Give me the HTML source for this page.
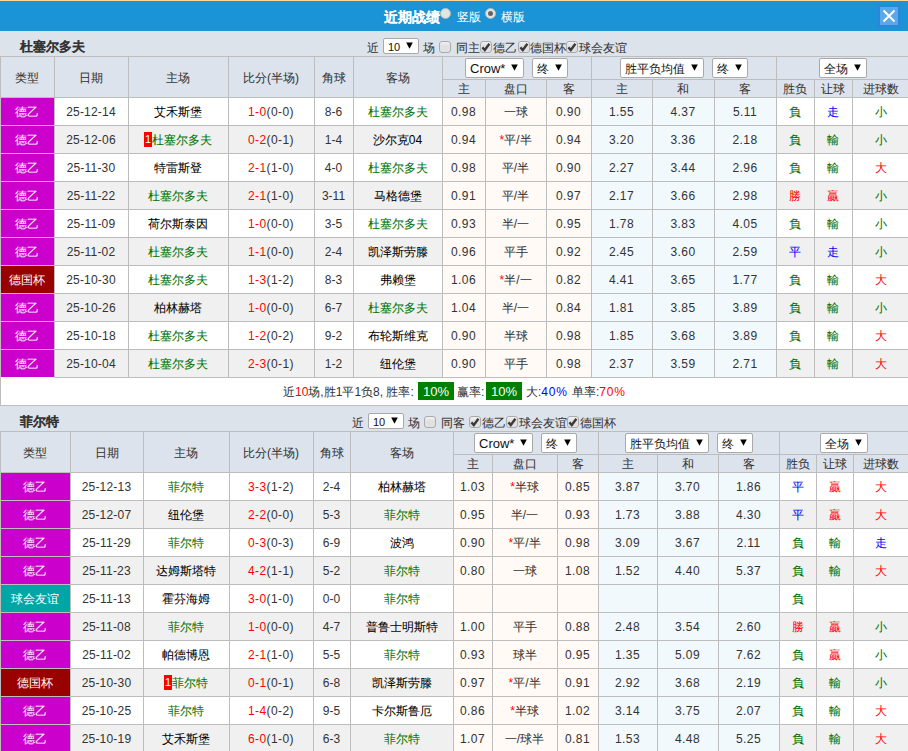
<!DOCTYPE html><html><head><meta charset="utf-8"><style>
html,body{margin:0;padding:0;}
body{width:908px;height:751px;overflow:hidden;position:relative;background:#fff;font-family:"Liberation Sans", sans-serif;font-size:12px;color:#333333;}
.a{position:absolute;}
.c{position:absolute;text-align:center;white-space:nowrap;overflow:hidden;}
.k{-webkit-text-stroke:0.05px currentColor;}
.hd{color:#333;}
.hd .k{-webkit-text-stroke:0.05px currentColor;}
.ty{color:#fff;}
.ty .k{-webkit-text-stroke:0;}
.t{position:absolute;white-space:nowrap;font-size:12px;}
.sel{position:absolute;background:#fff;border:1px solid #a9a9a9;border-radius:2px;font-size:12px;color:#111;text-align:left;padding-left:4px;box-sizing:content-box;white-space:nowrap;}
.sel .arr{position:absolute;right:5px;top:50%;margin-top:-4px;}
.chk{position:absolute;width:10px;height:10px;border:1px solid #aaaaaa;border-radius:3px;background:linear-gradient(#f2f2f2,#e0e0e0 40%,#e2e2e2);}
.chk svg{position:absolute;left:-1px;top:-1px;}
.radio{position:absolute;width:9px;height:9px;border-radius:50%;background:#e4e4e4;border:1px solid #b8b8b8;}
.radio.on::after{content:"";position:absolute;left:2px;top:2px;width:5px;height:5px;border-radius:50%;background:#666;}
.rc{display:inline-block;background:#f00;color:#fff;width:8px;height:15px;line-height:15px;text-align:center;vertical-align:middle;margin-top:-3px;font-size:11px;-webkit-text-stroke:0;}
.gb{position:absolute;background:#008000;color:#fff;height:18px;line-height:19px;font-size:13px;text-align:center;}
</style></head><body>
<div class="a" style="left:0px;top:0px;width:908px;height:1px;background:#fbd698;"></div>
<div class="a" style="left:0px;top:1px;width:908px;height:30px;background:#1a94d6;"></div>
<div class="t" style="left:384px;top:7px;font-size:14px;font-weight:bold;color:#fff;line-height:20px;"><span class="k">近期战绩</span></div>
<div class="radio" style="left:440px;top:8px;"></div>
<div class="t" style="left:457px;top:7px;font-size:12px;color:#fff;line-height:20px;"><span class="k">竖版</span></div>
<div class="radio on" style="left:485px;top:8px;"></div>
<div class="t" style="left:501px;top:7px;font-size:12px;color:#fff;line-height:20px;"><span class="k">横版</span></div>
<div class="a" style="left:878px;top:5px;width:22px;height:22px;background:#2b86e0;"></div>
<div class="a" style="left:880px;top:7px;width:18px;height:18px;background:#5aa8ea;"></div>
<svg class="a" style="left:880px;top:7px" width="18" height="18" viewBox="0 0 18 18"><path d="M3.5 3.5 L14.5 14.5 M14.5 3.5 L3.5 14.5" stroke="#fff" stroke-width="2"/></svg>
<div class="a" style="left:0px;top:31px;width:908px;height:25px;background:#dde3eb;"></div>
<div class="t" style="left:20px;top:38px;font-size:13px;font-weight:bold;color:#333;line-height:18px;"><span class="k">杜塞尔多夫</span></div>
<div class="t" style="left:367px;top:39px;line-height:18px;"><span class="k">近</span></div>
<div class="sel" style="left:383px;top:38px;width:30px;height:14px;line-height:16px;font-size:11px;">10<svg class="arr" width="7" height="7" viewBox="0 0 7 7"><path d="M0.2 0.5 H6.8 L3.5 6.8 Z" fill="#000"/></svg></div>
<div class="t" style="left:423px;top:39px;line-height:18px;"><span class="k">场</span></div>
<div class="chk" style="left:439px;top:41px;"></div>
<div class="t" style="left:456px;top:39px;line-height:18px;"><span class="k">同主</span></div>
<div class="chk" style="left:480px;top:41px;"><svg width="12" height="12" viewBox="0 0 12 12"><path d="M2.4 6.4 L4.8 9 L9.4 2.8" stroke="#3a3a3a" stroke-width="2.4" fill="none"/></svg></div>
<div class="t" style="left:493px;top:39px;line-height:18px;"><span class="k">德乙</span></div>
<div class="chk" style="left:518px;top:41px;"><svg width="12" height="12" viewBox="0 0 12 12"><path d="M2.4 6.4 L4.8 9 L9.4 2.8" stroke="#3a3a3a" stroke-width="2.4" fill="none"/></svg></div>
<div class="t" style="left:530px;top:39px;line-height:18px;"><span class="k">德国杯</span></div>
<div class="chk" style="left:566px;top:41px;"><svg width="12" height="12" viewBox="0 0 12 12"><path d="M2.4 6.4 L4.8 9 L9.4 2.8" stroke="#3a3a3a" stroke-width="2.4" fill="none"/></svg></div>
<div class="t" style="left:579px;top:39px;line-height:18px;"><span class="k">球会友谊</span></div>
<div class="a" style="left:0px;top:56px;width:909px;height:322px;background:#bdbdbd;"></div>
<div class="c hd" style="left:1px;top:57px;width:52px;padding-right:1px;height:40px;line-height:42px;background:#dce3ec;"><span class="k">类型</span></div>
<div class="c hd" style="left:55px;top:57px;width:72px;padding-right:1px;height:40px;line-height:42px;background:#dce3ec;"><span class="k">日期</span></div>
<div class="c hd" style="left:129px;top:57px;width:98px;padding-right:1px;height:40px;line-height:42px;background:#dce3ec;"><span class="k">主场</span></div>
<div class="c hd" style="left:229px;top:57px;width:84px;padding-right:1px;height:40px;line-height:42px;background:#dce3ec;"><span class="k">比分</span>(<span class="k">半场</span>)</div>
<div class="c hd" style="left:315px;top:57px;width:37px;padding-right:1px;height:40px;line-height:42px;background:#dce3ec;"><span class="k">角球</span></div>
<div class="c hd" style="left:354px;top:57px;width:87px;padding-right:1px;height:40px;line-height:42px;background:#dce3ec;"><span class="k">客场</span></div>
<div class="c" style="left:443px;top:57px;width:147px;padding-right:1px;height:22px;line-height:24px;background:#dce3ec;"></div>
<div class="c" style="left:592px;top:57px;width:183px;padding-right:1px;height:22px;line-height:24px;background:#dce3ec;"></div>
<div class="c" style="left:777px;top:57px;width:131px;padding-right:1px;height:22px;line-height:24px;background:#dce3ec;"></div>
<div class="c hd" style="left:443px;top:80px;width:41px;padding-right:1px;height:17px;line-height:19px;background:#dce3ec;"><span class="k">主</span></div>
<div class="c hd" style="left:486px;top:80px;width:59px;padding-right:1px;height:17px;line-height:19px;background:#dce3ec;"><span class="k">盘口</span></div>
<div class="c hd" style="left:547px;top:80px;width:43px;padding-right:1px;height:17px;line-height:19px;background:#dce3ec;"><span class="k">客</span></div>
<div class="c hd" style="left:592px;top:80px;width:59px;padding-right:1px;height:17px;line-height:19px;background:#dce3ec;"><span class="k">主</span></div>
<div class="c hd" style="left:653px;top:80px;width:60px;padding-right:1px;height:17px;line-height:19px;background:#dce3ec;"><span class="k">和</span></div>
<div class="c hd" style="left:715px;top:80px;width:60px;padding-right:1px;height:17px;line-height:19px;background:#dce3ec;"><span class="k">客</span></div>
<div class="c hd" style="left:777px;top:80px;width:36px;padding-right:1px;height:17px;line-height:19px;background:#dce3ec;"><span class="k">胜负</span></div>
<div class="c hd" style="left:815px;top:80px;width:36px;padding-right:1px;height:17px;line-height:19px;background:#dce3ec;"><span class="k">让球</span></div>
<div class="c hd" style="left:853px;top:80px;width:55px;padding-right:1px;height:17px;line-height:19px;background:#dce3ec;"><span class="k">进球数</span></div>
<div class="c ty" style="left:1px;top:98px;width:52px;padding-right:1px;height:27px;line-height:29px;background:#cc00cc;"><span class="k">德乙</span></div>
<div class="c" style="left:55px;top:98px;width:72px;padding-right:1px;height:27px;line-height:29px;background:#ffffff;letter-spacing:0.2px;letter-spacing:0.2px;">25-12-14</div>
<div class="c" style="left:129px;top:98px;width:98px;padding-right:1px;height:27px;line-height:29px;background:#ffffff;color:#000;color:#000;"><span class="k">艾禾斯堡</span></div>
<div class="c" style="left:229px;top:98px;width:84px;padding-right:1px;height:27px;line-height:29px;background:#ffffff;letter-spacing:0.4px;letter-spacing:0.4px;"><span style="color:#ff0000">1-0</span>(0-0)</div>
<div class="c" style="left:315px;top:98px;width:37px;padding-right:1px;height:27px;line-height:29px;background:#ffffff;">8-6</div>
<div class="c" style="left:354px;top:98px;width:87px;padding-right:1px;height:27px;line-height:29px;background:#ffffff;color:#000;color:#000;"><span style="color:#007000"><span class="k">杜塞尔多夫</span></span></div>
<div class="c" style="left:443px;top:98px;width:41px;padding-right:1px;height:27px;line-height:29px;background:#fffaf6;letter-spacing:0.4px;letter-spacing:0.4px;">0.98</div>
<div class="c" style="left:486px;top:98px;width:59px;padding-right:1px;height:27px;line-height:29px;background:#fffaf6;"><span class="k">一球</span></div>
<div class="c" style="left:547px;top:98px;width:43px;padding-right:1px;height:27px;line-height:29px;background:#fffaf6;letter-spacing:0.4px;letter-spacing:0.4px;">0.90</div>
<div class="c" style="left:592px;top:98px;width:59px;padding-right:1px;height:27px;line-height:29px;background:#f2f9fd;letter-spacing:0.4px;letter-spacing:0.4px;">1.55</div>
<div class="c" style="left:653px;top:98px;width:60px;padding-right:1px;height:27px;line-height:29px;background:#f2f9fd;letter-spacing:0.4px;letter-spacing:0.4px;">4.37</div>
<div class="c" style="left:715px;top:98px;width:60px;padding-right:1px;height:27px;line-height:29px;background:#f2f9fd;letter-spacing:0.4px;letter-spacing:0.4px;">5.11</div>
<div class="c" style="left:777px;top:98px;width:36px;padding-right:1px;height:27px;line-height:29px;background:#ffffff;"><span style="color:#007000"><span class="k">負</span></span></div>
<div class="c" style="left:815px;top:98px;width:36px;padding-right:1px;height:27px;line-height:29px;background:#ffffff;"><span style="color:#0000ff"><span class="k">走</span></span></div>
<div class="c" style="left:853px;top:98px;width:55px;padding-right:1px;height:27px;line-height:29px;background:#ffffff;"><span style="color:#007000"><span class="k">小</span></span></div>
<div class="c ty" style="left:1px;top:126px;width:52px;padding-right:1px;height:27px;line-height:29px;background:#cc00cc;"><span class="k">德乙</span></div>
<div class="c" style="left:55px;top:126px;width:72px;padding-right:1px;height:27px;line-height:29px;background:#f0f0f0;letter-spacing:0.2px;letter-spacing:0.2px;">25-12-06</div>
<div class="c" style="left:129px;top:126px;width:98px;padding-right:1px;height:27px;line-height:29px;background:#f0f0f0;color:#000;color:#000;"><span class="rc">1</span><span style="color:#007000"><span class="k">杜塞尔多夫</span></span></div>
<div class="c" style="left:229px;top:126px;width:84px;padding-right:1px;height:27px;line-height:29px;background:#f0f0f0;letter-spacing:0.4px;letter-spacing:0.4px;"><span style="color:#ff0000">0-2</span>(0-1)</div>
<div class="c" style="left:315px;top:126px;width:37px;padding-right:1px;height:27px;line-height:29px;background:#f0f0f0;">1-4</div>
<div class="c" style="left:354px;top:126px;width:87px;padding-right:1px;height:27px;line-height:29px;background:#f0f0f0;color:#000;color:#000;"><span class="k">沙尔克</span>04</div>
<div class="c" style="left:443px;top:126px;width:41px;padding-right:1px;height:27px;line-height:29px;background:#fffaf6;letter-spacing:0.4px;letter-spacing:0.4px;">0.94</div>
<div class="c" style="left:486px;top:126px;width:59px;padding-right:1px;height:27px;line-height:29px;background:#fffaf6;"><span style="color:#ff0000">*</span><span class="k">平</span>/<span class="k">半</span></div>
<div class="c" style="left:547px;top:126px;width:43px;padding-right:1px;height:27px;line-height:29px;background:#fffaf6;letter-spacing:0.4px;letter-spacing:0.4px;">0.94</div>
<div class="c" style="left:592px;top:126px;width:59px;padding-right:1px;height:27px;line-height:29px;background:#f2f9fd;letter-spacing:0.4px;letter-spacing:0.4px;">3.20</div>
<div class="c" style="left:653px;top:126px;width:60px;padding-right:1px;height:27px;line-height:29px;background:#f2f9fd;letter-spacing:0.4px;letter-spacing:0.4px;">3.36</div>
<div class="c" style="left:715px;top:126px;width:60px;padding-right:1px;height:27px;line-height:29px;background:#f2f9fd;letter-spacing:0.4px;letter-spacing:0.4px;">2.18</div>
<div class="c" style="left:777px;top:126px;width:36px;padding-right:1px;height:27px;line-height:29px;background:#f0f0f0;"><span style="color:#007000"><span class="k">負</span></span></div>
<div class="c" style="left:815px;top:126px;width:36px;padding-right:1px;height:27px;line-height:29px;background:#f0f0f0;"><span style="color:#007000"><span class="k">輸</span></span></div>
<div class="c" style="left:853px;top:126px;width:55px;padding-right:1px;height:27px;line-height:29px;background:#f0f0f0;"><span style="color:#007000"><span class="k">小</span></span></div>
<div class="c ty" style="left:1px;top:154px;width:52px;padding-right:1px;height:27px;line-height:29px;background:#cc00cc;"><span class="k">德乙</span></div>
<div class="c" style="left:55px;top:154px;width:72px;padding-right:1px;height:27px;line-height:29px;background:#ffffff;letter-spacing:0.2px;letter-spacing:0.2px;">25-11-30</div>
<div class="c" style="left:129px;top:154px;width:98px;padding-right:1px;height:27px;line-height:29px;background:#ffffff;color:#000;color:#000;"><span class="k">特雷斯登</span></div>
<div class="c" style="left:229px;top:154px;width:84px;padding-right:1px;height:27px;line-height:29px;background:#ffffff;letter-spacing:0.4px;letter-spacing:0.4px;"><span style="color:#ff0000">2-1</span>(1-0)</div>
<div class="c" style="left:315px;top:154px;width:37px;padding-right:1px;height:27px;line-height:29px;background:#ffffff;">4-0</div>
<div class="c" style="left:354px;top:154px;width:87px;padding-right:1px;height:27px;line-height:29px;background:#ffffff;color:#000;color:#000;"><span style="color:#007000"><span class="k">杜塞尔多夫</span></span></div>
<div class="c" style="left:443px;top:154px;width:41px;padding-right:1px;height:27px;line-height:29px;background:#fffaf6;letter-spacing:0.4px;letter-spacing:0.4px;">0.98</div>
<div class="c" style="left:486px;top:154px;width:59px;padding-right:1px;height:27px;line-height:29px;background:#fffaf6;"><span class="k">平</span>/<span class="k">半</span></div>
<div class="c" style="left:547px;top:154px;width:43px;padding-right:1px;height:27px;line-height:29px;background:#fffaf6;letter-spacing:0.4px;letter-spacing:0.4px;">0.90</div>
<div class="c" style="left:592px;top:154px;width:59px;padding-right:1px;height:27px;line-height:29px;background:#f2f9fd;letter-spacing:0.4px;letter-spacing:0.4px;">2.27</div>
<div class="c" style="left:653px;top:154px;width:60px;padding-right:1px;height:27px;line-height:29px;background:#f2f9fd;letter-spacing:0.4px;letter-spacing:0.4px;">3.44</div>
<div class="c" style="left:715px;top:154px;width:60px;padding-right:1px;height:27px;line-height:29px;background:#f2f9fd;letter-spacing:0.4px;letter-spacing:0.4px;">2.96</div>
<div class="c" style="left:777px;top:154px;width:36px;padding-right:1px;height:27px;line-height:29px;background:#ffffff;"><span style="color:#007000"><span class="k">負</span></span></div>
<div class="c" style="left:815px;top:154px;width:36px;padding-right:1px;height:27px;line-height:29px;background:#ffffff;"><span style="color:#007000"><span class="k">輸</span></span></div>
<div class="c" style="left:853px;top:154px;width:55px;padding-right:1px;height:27px;line-height:29px;background:#ffffff;"><span style="color:#ff0000"><span class="k">大</span></span></div>
<div class="c ty" style="left:1px;top:182px;width:52px;padding-right:1px;height:27px;line-height:29px;background:#cc00cc;"><span class="k">德乙</span></div>
<div class="c" style="left:55px;top:182px;width:72px;padding-right:1px;height:27px;line-height:29px;background:#f0f0f0;letter-spacing:0.2px;letter-spacing:0.2px;">25-11-22</div>
<div class="c" style="left:129px;top:182px;width:98px;padding-right:1px;height:27px;line-height:29px;background:#f0f0f0;color:#000;color:#000;"><span style="color:#007000"><span class="k">杜塞尔多夫</span></span></div>
<div class="c" style="left:229px;top:182px;width:84px;padding-right:1px;height:27px;line-height:29px;background:#f0f0f0;letter-spacing:0.4px;letter-spacing:0.4px;"><span style="color:#ff0000">2-1</span>(1-0)</div>
<div class="c" style="left:315px;top:182px;width:37px;padding-right:1px;height:27px;line-height:29px;background:#f0f0f0;">3-11</div>
<div class="c" style="left:354px;top:182px;width:87px;padding-right:1px;height:27px;line-height:29px;background:#f0f0f0;color:#000;color:#000;"><span class="k">马格德堡</span></div>
<div class="c" style="left:443px;top:182px;width:41px;padding-right:1px;height:27px;line-height:29px;background:#fffaf6;letter-spacing:0.4px;letter-spacing:0.4px;">0.91</div>
<div class="c" style="left:486px;top:182px;width:59px;padding-right:1px;height:27px;line-height:29px;background:#fffaf6;"><span class="k">平</span>/<span class="k">半</span></div>
<div class="c" style="left:547px;top:182px;width:43px;padding-right:1px;height:27px;line-height:29px;background:#fffaf6;letter-spacing:0.4px;letter-spacing:0.4px;">0.97</div>
<div class="c" style="left:592px;top:182px;width:59px;padding-right:1px;height:27px;line-height:29px;background:#f2f9fd;letter-spacing:0.4px;letter-spacing:0.4px;">2.17</div>
<div class="c" style="left:653px;top:182px;width:60px;padding-right:1px;height:27px;line-height:29px;background:#f2f9fd;letter-spacing:0.4px;letter-spacing:0.4px;">3.66</div>
<div class="c" style="left:715px;top:182px;width:60px;padding-right:1px;height:27px;line-height:29px;background:#f2f9fd;letter-spacing:0.4px;letter-spacing:0.4px;">2.98</div>
<div class="c" style="left:777px;top:182px;width:36px;padding-right:1px;height:27px;line-height:29px;background:#f0f0f0;"><span style="color:#ff0000"><span class="k">勝</span></span></div>
<div class="c" style="left:815px;top:182px;width:36px;padding-right:1px;height:27px;line-height:29px;background:#f0f0f0;"><span style="color:#ff0000"><span class="k">贏</span></span></div>
<div class="c" style="left:853px;top:182px;width:55px;padding-right:1px;height:27px;line-height:29px;background:#f0f0f0;"><span style="color:#007000"><span class="k">小</span></span></div>
<div class="c ty" style="left:1px;top:210px;width:52px;padding-right:1px;height:27px;line-height:29px;background:#cc00cc;"><span class="k">德乙</span></div>
<div class="c" style="left:55px;top:210px;width:72px;padding-right:1px;height:27px;line-height:29px;background:#ffffff;letter-spacing:0.2px;letter-spacing:0.2px;">25-11-09</div>
<div class="c" style="left:129px;top:210px;width:98px;padding-right:1px;height:27px;line-height:29px;background:#ffffff;color:#000;color:#000;"><span class="k">荷尔斯泰因</span></div>
<div class="c" style="left:229px;top:210px;width:84px;padding-right:1px;height:27px;line-height:29px;background:#ffffff;letter-spacing:0.4px;letter-spacing:0.4px;"><span style="color:#ff0000">1-0</span>(0-0)</div>
<div class="c" style="left:315px;top:210px;width:37px;padding-right:1px;height:27px;line-height:29px;background:#ffffff;">3-5</div>
<div class="c" style="left:354px;top:210px;width:87px;padding-right:1px;height:27px;line-height:29px;background:#ffffff;color:#000;color:#000;"><span style="color:#007000"><span class="k">杜塞尔多夫</span></span></div>
<div class="c" style="left:443px;top:210px;width:41px;padding-right:1px;height:27px;line-height:29px;background:#fffaf6;letter-spacing:0.4px;letter-spacing:0.4px;">0.93</div>
<div class="c" style="left:486px;top:210px;width:59px;padding-right:1px;height:27px;line-height:29px;background:#fffaf6;"><span class="k">半</span>/<span class="k">一</span></div>
<div class="c" style="left:547px;top:210px;width:43px;padding-right:1px;height:27px;line-height:29px;background:#fffaf6;letter-spacing:0.4px;letter-spacing:0.4px;">0.95</div>
<div class="c" style="left:592px;top:210px;width:59px;padding-right:1px;height:27px;line-height:29px;background:#f2f9fd;letter-spacing:0.4px;letter-spacing:0.4px;">1.78</div>
<div class="c" style="left:653px;top:210px;width:60px;padding-right:1px;height:27px;line-height:29px;background:#f2f9fd;letter-spacing:0.4px;letter-spacing:0.4px;">3.83</div>
<div class="c" style="left:715px;top:210px;width:60px;padding-right:1px;height:27px;line-height:29px;background:#f2f9fd;letter-spacing:0.4px;letter-spacing:0.4px;">4.05</div>
<div class="c" style="left:777px;top:210px;width:36px;padding-right:1px;height:27px;line-height:29px;background:#ffffff;"><span style="color:#007000"><span class="k">負</span></span></div>
<div class="c" style="left:815px;top:210px;width:36px;padding-right:1px;height:27px;line-height:29px;background:#ffffff;"><span style="color:#007000"><span class="k">輸</span></span></div>
<div class="c" style="left:853px;top:210px;width:55px;padding-right:1px;height:27px;line-height:29px;background:#ffffff;"><span style="color:#007000"><span class="k">小</span></span></div>
<div class="c ty" style="left:1px;top:238px;width:52px;padding-right:1px;height:27px;line-height:29px;background:#cc00cc;"><span class="k">德乙</span></div>
<div class="c" style="left:55px;top:238px;width:72px;padding-right:1px;height:27px;line-height:29px;background:#f0f0f0;letter-spacing:0.2px;letter-spacing:0.2px;">25-11-02</div>
<div class="c" style="left:129px;top:238px;width:98px;padding-right:1px;height:27px;line-height:29px;background:#f0f0f0;color:#000;color:#000;"><span style="color:#007000"><span class="k">杜塞尔多夫</span></span></div>
<div class="c" style="left:229px;top:238px;width:84px;padding-right:1px;height:27px;line-height:29px;background:#f0f0f0;letter-spacing:0.4px;letter-spacing:0.4px;"><span style="color:#ff0000">1-1</span>(0-0)</div>
<div class="c" style="left:315px;top:238px;width:37px;padding-right:1px;height:27px;line-height:29px;background:#f0f0f0;">2-4</div>
<div class="c" style="left:354px;top:238px;width:87px;padding-right:1px;height:27px;line-height:29px;background:#f0f0f0;color:#000;color:#000;"><span class="k">凯泽斯劳滕</span></div>
<div class="c" style="left:443px;top:238px;width:41px;padding-right:1px;height:27px;line-height:29px;background:#fffaf6;letter-spacing:0.4px;letter-spacing:0.4px;">0.96</div>
<div class="c" style="left:486px;top:238px;width:59px;padding-right:1px;height:27px;line-height:29px;background:#fffaf6;"><span class="k">平手</span></div>
<div class="c" style="left:547px;top:238px;width:43px;padding-right:1px;height:27px;line-height:29px;background:#fffaf6;letter-spacing:0.4px;letter-spacing:0.4px;">0.92</div>
<div class="c" style="left:592px;top:238px;width:59px;padding-right:1px;height:27px;line-height:29px;background:#f2f9fd;letter-spacing:0.4px;letter-spacing:0.4px;">2.45</div>
<div class="c" style="left:653px;top:238px;width:60px;padding-right:1px;height:27px;line-height:29px;background:#f2f9fd;letter-spacing:0.4px;letter-spacing:0.4px;">3.60</div>
<div class="c" style="left:715px;top:238px;width:60px;padding-right:1px;height:27px;line-height:29px;background:#f2f9fd;letter-spacing:0.4px;letter-spacing:0.4px;">2.59</div>
<div class="c" style="left:777px;top:238px;width:36px;padding-right:1px;height:27px;line-height:29px;background:#f0f0f0;"><span style="color:#0000ff"><span class="k">平</span></span></div>
<div class="c" style="left:815px;top:238px;width:36px;padding-right:1px;height:27px;line-height:29px;background:#f0f0f0;"><span style="color:#0000ff"><span class="k">走</span></span></div>
<div class="c" style="left:853px;top:238px;width:55px;padding-right:1px;height:27px;line-height:29px;background:#f0f0f0;"><span style="color:#007000"><span class="k">小</span></span></div>
<div class="c ty" style="left:1px;top:266px;width:52px;padding-right:1px;height:27px;line-height:29px;background:#990000;"><span class="k">德国杯</span></div>
<div class="c" style="left:55px;top:266px;width:72px;padding-right:1px;height:27px;line-height:29px;background:#ffffff;letter-spacing:0.2px;letter-spacing:0.2px;">25-10-30</div>
<div class="c" style="left:129px;top:266px;width:98px;padding-right:1px;height:27px;line-height:29px;background:#ffffff;color:#000;color:#000;"><span style="color:#007000"><span class="k">杜塞尔多夫</span></span></div>
<div class="c" style="left:229px;top:266px;width:84px;padding-right:1px;height:27px;line-height:29px;background:#ffffff;letter-spacing:0.4px;letter-spacing:0.4px;"><span style="color:#ff0000">1-3</span>(1-2)</div>
<div class="c" style="left:315px;top:266px;width:37px;padding-right:1px;height:27px;line-height:29px;background:#ffffff;">8-3</div>
<div class="c" style="left:354px;top:266px;width:87px;padding-right:1px;height:27px;line-height:29px;background:#ffffff;color:#000;color:#000;"><span class="k">弗赖堡</span></div>
<div class="c" style="left:443px;top:266px;width:41px;padding-right:1px;height:27px;line-height:29px;background:#fffaf6;letter-spacing:0.4px;letter-spacing:0.4px;">1.06</div>
<div class="c" style="left:486px;top:266px;width:59px;padding-right:1px;height:27px;line-height:29px;background:#fffaf6;"><span style="color:#ff0000">*</span><span class="k">半</span>/<span class="k">一</span></div>
<div class="c" style="left:547px;top:266px;width:43px;padding-right:1px;height:27px;line-height:29px;background:#fffaf6;letter-spacing:0.4px;letter-spacing:0.4px;">0.82</div>
<div class="c" style="left:592px;top:266px;width:59px;padding-right:1px;height:27px;line-height:29px;background:#f2f9fd;letter-spacing:0.4px;letter-spacing:0.4px;">4.41</div>
<div class="c" style="left:653px;top:266px;width:60px;padding-right:1px;height:27px;line-height:29px;background:#f2f9fd;letter-spacing:0.4px;letter-spacing:0.4px;">3.65</div>
<div class="c" style="left:715px;top:266px;width:60px;padding-right:1px;height:27px;line-height:29px;background:#f2f9fd;letter-spacing:0.4px;letter-spacing:0.4px;">1.77</div>
<div class="c" style="left:777px;top:266px;width:36px;padding-right:1px;height:27px;line-height:29px;background:#ffffff;"><span style="color:#007000"><span class="k">負</span></span></div>
<div class="c" style="left:815px;top:266px;width:36px;padding-right:1px;height:27px;line-height:29px;background:#ffffff;"><span style="color:#007000"><span class="k">輸</span></span></div>
<div class="c" style="left:853px;top:266px;width:55px;padding-right:1px;height:27px;line-height:29px;background:#ffffff;"><span style="color:#ff0000"><span class="k">大</span></span></div>
<div class="c ty" style="left:1px;top:294px;width:52px;padding-right:1px;height:27px;line-height:29px;background:#cc00cc;"><span class="k">德乙</span></div>
<div class="c" style="left:55px;top:294px;width:72px;padding-right:1px;height:27px;line-height:29px;background:#f0f0f0;letter-spacing:0.2px;letter-spacing:0.2px;">25-10-26</div>
<div class="c" style="left:129px;top:294px;width:98px;padding-right:1px;height:27px;line-height:29px;background:#f0f0f0;color:#000;color:#000;"><span class="k">柏林赫塔</span></div>
<div class="c" style="left:229px;top:294px;width:84px;padding-right:1px;height:27px;line-height:29px;background:#f0f0f0;letter-spacing:0.4px;letter-spacing:0.4px;"><span style="color:#ff0000">1-0</span>(0-0)</div>
<div class="c" style="left:315px;top:294px;width:37px;padding-right:1px;height:27px;line-height:29px;background:#f0f0f0;">6-7</div>
<div class="c" style="left:354px;top:294px;width:87px;padding-right:1px;height:27px;line-height:29px;background:#f0f0f0;color:#000;color:#000;"><span style="color:#007000"><span class="k">杜塞尔多夫</span></span></div>
<div class="c" style="left:443px;top:294px;width:41px;padding-right:1px;height:27px;line-height:29px;background:#fffaf6;letter-spacing:0.4px;letter-spacing:0.4px;">1.04</div>
<div class="c" style="left:486px;top:294px;width:59px;padding-right:1px;height:27px;line-height:29px;background:#fffaf6;"><span class="k">半</span>/<span class="k">一</span></div>
<div class="c" style="left:547px;top:294px;width:43px;padding-right:1px;height:27px;line-height:29px;background:#fffaf6;letter-spacing:0.4px;letter-spacing:0.4px;">0.84</div>
<div class="c" style="left:592px;top:294px;width:59px;padding-right:1px;height:27px;line-height:29px;background:#f2f9fd;letter-spacing:0.4px;letter-spacing:0.4px;">1.81</div>
<div class="c" style="left:653px;top:294px;width:60px;padding-right:1px;height:27px;line-height:29px;background:#f2f9fd;letter-spacing:0.4px;letter-spacing:0.4px;">3.85</div>
<div class="c" style="left:715px;top:294px;width:60px;padding-right:1px;height:27px;line-height:29px;background:#f2f9fd;letter-spacing:0.4px;letter-spacing:0.4px;">3.89</div>
<div class="c" style="left:777px;top:294px;width:36px;padding-right:1px;height:27px;line-height:29px;background:#f0f0f0;"><span style="color:#007000"><span class="k">負</span></span></div>
<div class="c" style="left:815px;top:294px;width:36px;padding-right:1px;height:27px;line-height:29px;background:#f0f0f0;"><span style="color:#007000"><span class="k">輸</span></span></div>
<div class="c" style="left:853px;top:294px;width:55px;padding-right:1px;height:27px;line-height:29px;background:#f0f0f0;"><span style="color:#007000"><span class="k">小</span></span></div>
<div class="c ty" style="left:1px;top:322px;width:52px;padding-right:1px;height:27px;line-height:29px;background:#cc00cc;"><span class="k">德乙</span></div>
<div class="c" style="left:55px;top:322px;width:72px;padding-right:1px;height:27px;line-height:29px;background:#ffffff;letter-spacing:0.2px;letter-spacing:0.2px;">25-10-18</div>
<div class="c" style="left:129px;top:322px;width:98px;padding-right:1px;height:27px;line-height:29px;background:#ffffff;color:#000;color:#000;"><span style="color:#007000"><span class="k">杜塞尔多夫</span></span></div>
<div class="c" style="left:229px;top:322px;width:84px;padding-right:1px;height:27px;line-height:29px;background:#ffffff;letter-spacing:0.4px;letter-spacing:0.4px;"><span style="color:#ff0000">1-2</span>(0-2)</div>
<div class="c" style="left:315px;top:322px;width:37px;padding-right:1px;height:27px;line-height:29px;background:#ffffff;">9-2</div>
<div class="c" style="left:354px;top:322px;width:87px;padding-right:1px;height:27px;line-height:29px;background:#ffffff;color:#000;color:#000;"><span class="k">布轮斯维克</span></div>
<div class="c" style="left:443px;top:322px;width:41px;padding-right:1px;height:27px;line-height:29px;background:#fffaf6;letter-spacing:0.4px;letter-spacing:0.4px;">0.90</div>
<div class="c" style="left:486px;top:322px;width:59px;padding-right:1px;height:27px;line-height:29px;background:#fffaf6;"><span class="k">半球</span></div>
<div class="c" style="left:547px;top:322px;width:43px;padding-right:1px;height:27px;line-height:29px;background:#fffaf6;letter-spacing:0.4px;letter-spacing:0.4px;">0.98</div>
<div class="c" style="left:592px;top:322px;width:59px;padding-right:1px;height:27px;line-height:29px;background:#f2f9fd;letter-spacing:0.4px;letter-spacing:0.4px;">1.85</div>
<div class="c" style="left:653px;top:322px;width:60px;padding-right:1px;height:27px;line-height:29px;background:#f2f9fd;letter-spacing:0.4px;letter-spacing:0.4px;">3.68</div>
<div class="c" style="left:715px;top:322px;width:60px;padding-right:1px;height:27px;line-height:29px;background:#f2f9fd;letter-spacing:0.4px;letter-spacing:0.4px;">3.89</div>
<div class="c" style="left:777px;top:322px;width:36px;padding-right:1px;height:27px;line-height:29px;background:#ffffff;"><span style="color:#007000"><span class="k">負</span></span></div>
<div class="c" style="left:815px;top:322px;width:36px;padding-right:1px;height:27px;line-height:29px;background:#ffffff;"><span style="color:#007000"><span class="k">輸</span></span></div>
<div class="c" style="left:853px;top:322px;width:55px;padding-right:1px;height:27px;line-height:29px;background:#ffffff;"><span style="color:#ff0000"><span class="k">大</span></span></div>
<div class="c ty" style="left:1px;top:350px;width:52px;padding-right:1px;height:27px;line-height:29px;background:#cc00cc;"><span class="k">德乙</span></div>
<div class="c" style="left:55px;top:350px;width:72px;padding-right:1px;height:27px;line-height:29px;background:#f0f0f0;letter-spacing:0.2px;letter-spacing:0.2px;">25-10-04</div>
<div class="c" style="left:129px;top:350px;width:98px;padding-right:1px;height:27px;line-height:29px;background:#f0f0f0;color:#000;color:#000;"><span style="color:#007000"><span class="k">杜塞尔多夫</span></span></div>
<div class="c" style="left:229px;top:350px;width:84px;padding-right:1px;height:27px;line-height:29px;background:#f0f0f0;letter-spacing:0.4px;letter-spacing:0.4px;"><span style="color:#ff0000">2-3</span>(0-1)</div>
<div class="c" style="left:315px;top:350px;width:37px;padding-right:1px;height:27px;line-height:29px;background:#f0f0f0;">1-2</div>
<div class="c" style="left:354px;top:350px;width:87px;padding-right:1px;height:27px;line-height:29px;background:#f0f0f0;color:#000;color:#000;"><span class="k">纽伦堡</span></div>
<div class="c" style="left:443px;top:350px;width:41px;padding-right:1px;height:27px;line-height:29px;background:#fffaf6;letter-spacing:0.4px;letter-spacing:0.4px;">0.90</div>
<div class="c" style="left:486px;top:350px;width:59px;padding-right:1px;height:27px;line-height:29px;background:#fffaf6;"><span class="k">平手</span></div>
<div class="c" style="left:547px;top:350px;width:43px;padding-right:1px;height:27px;line-height:29px;background:#fffaf6;letter-spacing:0.4px;letter-spacing:0.4px;">0.98</div>
<div class="c" style="left:592px;top:350px;width:59px;padding-right:1px;height:27px;line-height:29px;background:#f2f9fd;letter-spacing:0.4px;letter-spacing:0.4px;">2.37</div>
<div class="c" style="left:653px;top:350px;width:60px;padding-right:1px;height:27px;line-height:29px;background:#f2f9fd;letter-spacing:0.4px;letter-spacing:0.4px;">3.59</div>
<div class="c" style="left:715px;top:350px;width:60px;padding-right:1px;height:27px;line-height:29px;background:#f2f9fd;letter-spacing:0.4px;letter-spacing:0.4px;">2.71</div>
<div class="c" style="left:777px;top:350px;width:36px;padding-right:1px;height:27px;line-height:29px;background:#f0f0f0;"><span style="color:#007000"><span class="k">負</span></span></div>
<div class="c" style="left:815px;top:350px;width:36px;padding-right:1px;height:27px;line-height:29px;background:#f0f0f0;"><span style="color:#007000"><span class="k">輸</span></span></div>
<div class="c" style="left:853px;top:350px;width:55px;padding-right:1px;height:27px;line-height:29px;background:#f0f0f0;"><span style="color:#ff0000"><span class="k">大</span></span></div>
<div class="sel" style="left:465px;top:58px;width:53px;height:18px;line-height:20px;font-size:13px;">Crow*<svg class="arr" width="7" height="7" viewBox="0 0 7 7"><path d="M0.2 0.5 H6.8 L3.5 6.8 Z" fill="#000"/></svg></div>
<div class="sel" style="left:532px;top:58px;width:30px;height:18px;line-height:20px;font-size:12px;">终<svg class="arr" width="7" height="7" viewBox="0 0 7 7"><path d="M0.2 0.5 H6.8 L3.5 6.8 Z" fill="#000"/></svg></div>
<div class="sel" style="left:620px;top:58px;width:78px;height:18px;line-height:20px;font-size:12px;">胜平负均值<svg class="arr" width="7" height="7" viewBox="0 0 7 7"><path d="M0.2 0.5 H6.8 L3.5 6.8 Z" fill="#000"/></svg></div>
<div class="sel" style="left:712px;top:58px;width:30px;height:18px;line-height:20px;font-size:12px;">终<svg class="arr" width="7" height="7" viewBox="0 0 7 7"><path d="M0.2 0.5 H6.8 L3.5 6.8 Z" fill="#000"/></svg></div>
<div class="sel" style="left:819px;top:58px;width:42px;height:18px;line-height:20px;font-size:12px;">全场<svg class="arr" width="7" height="7" viewBox="0 0 7 7"><path d="M0.2 0.5 H6.8 L3.5 6.8 Z" fill="#000"/></svg></div>
<div class="a" style="left:0px;top:377px;width:909px;height:29px;background:#bdbdbd;"></div>
<div class="a" style="left:1px;top:378px;width:907px;height:27px;background:#ffffff;"></div>
<div class="a" style="left:1px;top:377px;width:53px;height:1px;background:#ffffff;"></div>
<div class="t" style="left:283px;top:383px;line-height:18px;"><span class="k">近</span><span style="color:#f00">10</span><span class="k">场</span>,<span class="k">胜</span>1<span class="k">平</span>1<span class="k">负</span>8, <span class="k">胜率</span>:</div>
<div class="gb" style="left:418px;top:382px;width:36px;">10%</div>
<div class="t" style="left:457px;top:383px;line-height:18px;"><span class="k">赢率</span>:</div>
<div class="gb" style="left:486px;top:382px;width:36px;">10%</div>
<div class="t" style="left:526px;top:383px;line-height:18px;"><span class="k">大</span>:<span style="color:#00f;letter-spacing:0.8px">40%</span></div>
<div class="t" style="left:572px;top:383px;line-height:18px;"><span class="k">单率</span>:<span style="color:#f00;letter-spacing:0.8px">70%</span></div>
<div class="a" style="left:0px;top:406px;width:908px;height:25px;background:#dde3eb;"></div>
<div class="t" style="left:20px;top:413px;font-size:13px;font-weight:bold;color:#333;line-height:18px;"><span class="k">菲尔特</span></div>
<div class="t" style="left:352px;top:414px;line-height:18px;"><span class="k">近</span></div>
<div class="sel" style="left:368px;top:413px;width:30px;height:14px;line-height:16px;font-size:11px;">10<svg class="arr" width="7" height="7" viewBox="0 0 7 7"><path d="M0.2 0.5 H6.8 L3.5 6.8 Z" fill="#000"/></svg></div>
<div class="t" style="left:408px;top:414px;line-height:18px;"><span class="k">场</span></div>
<div class="chk" style="left:424px;top:416px;"></div>
<div class="t" style="left:441px;top:414px;line-height:18px;"><span class="k">同客</span></div>
<div class="chk" style="left:469px;top:416px;"><svg width="12" height="12" viewBox="0 0 12 12"><path d="M2.4 6.4 L4.8 9 L9.4 2.8" stroke="#3a3a3a" stroke-width="2.4" fill="none"/></svg></div>
<div class="t" style="left:482px;top:414px;line-height:18px;"><span class="k">德乙</span></div>
<div class="chk" style="left:506px;top:416px;"><svg width="12" height="12" viewBox="0 0 12 12"><path d="M2.4 6.4 L4.8 9 L9.4 2.8" stroke="#3a3a3a" stroke-width="2.4" fill="none"/></svg></div>
<div class="t" style="left:519px;top:414px;line-height:18px;"><span class="k">球会友谊</span></div>
<div class="chk" style="left:567px;top:416px;"><svg width="12" height="12" viewBox="0 0 12 12"><path d="M2.4 6.4 L4.8 9 L9.4 2.8" stroke="#3a3a3a" stroke-width="2.4" fill="none"/></svg></div>
<div class="t" style="left:580px;top:414px;line-height:18px;"><span class="k">德国杯</span></div>
<div class="a" style="left:0px;top:431px;width:909px;height:322px;background:#bdbdbd;"></div>
<div class="c hd" style="left:1px;top:432px;width:68px;padding-right:1px;height:40px;line-height:42px;background:#dce3ec;"><span class="k">类型</span></div>
<div class="c hd" style="left:71px;top:432px;width:71px;padding-right:1px;height:40px;line-height:42px;background:#dce3ec;"><span class="k">日期</span></div>
<div class="c hd" style="left:144px;top:432px;width:84px;padding-right:1px;height:40px;line-height:42px;background:#dce3ec;"><span class="k">主场</span></div>
<div class="c hd" style="left:230px;top:432px;width:82px;padding-right:1px;height:40px;line-height:42px;background:#dce3ec;"><span class="k">比分</span>(<span class="k">半场</span>)</div>
<div class="c hd" style="left:314px;top:432px;width:35px;padding-right:1px;height:40px;line-height:42px;background:#dce3ec;"><span class="k">角球</span></div>
<div class="c hd" style="left:351px;top:432px;width:101px;padding-right:1px;height:40px;line-height:42px;background:#dce3ec;"><span class="k">客场</span></div>
<div class="c" style="left:454px;top:432px;width:143px;padding-right:1px;height:22px;line-height:24px;background:#dce3ec;"></div>
<div class="c" style="left:599px;top:432px;width:179px;padding-right:1px;height:22px;line-height:24px;background:#dce3ec;"></div>
<div class="c" style="left:780px;top:432px;width:128px;padding-right:1px;height:22px;line-height:24px;background:#dce3ec;"></div>
<div class="c hd" style="left:454px;top:455px;width:37px;padding-right:1px;height:17px;line-height:19px;background:#dce3ec;"><span class="k">主</span></div>
<div class="c hd" style="left:493px;top:455px;width:63px;padding-right:1px;height:17px;line-height:19px;background:#dce3ec;"><span class="k">盘口</span></div>
<div class="c hd" style="left:558px;top:455px;width:39px;padding-right:1px;height:17px;line-height:19px;background:#dce3ec;"><span class="k">客</span></div>
<div class="c hd" style="left:599px;top:455px;width:57px;padding-right:1px;height:17px;line-height:19px;background:#dce3ec;"><span class="k">主</span></div>
<div class="c hd" style="left:658px;top:455px;width:59px;padding-right:1px;height:17px;line-height:19px;background:#dce3ec;"><span class="k">和</span></div>
<div class="c hd" style="left:719px;top:455px;width:59px;padding-right:1px;height:17px;line-height:19px;background:#dce3ec;"><span class="k">客</span></div>
<div class="c hd" style="left:780px;top:455px;width:35px;padding-right:1px;height:17px;line-height:19px;background:#dce3ec;"><span class="k">胜负</span></div>
<div class="c hd" style="left:817px;top:455px;width:35px;padding-right:1px;height:17px;line-height:19px;background:#dce3ec;"><span class="k">让球</span></div>
<div class="c hd" style="left:854px;top:455px;width:54px;padding-right:1px;height:17px;line-height:19px;background:#dce3ec;"><span class="k">进球数</span></div>
<div class="c ty" style="left:1px;top:473px;width:68px;padding-right:1px;height:27px;line-height:29px;background:#cc00cc;"><span class="k">德乙</span></div>
<div class="c" style="left:71px;top:473px;width:71px;padding-right:1px;height:27px;line-height:29px;background:#ffffff;letter-spacing:0.2px;letter-spacing:0.2px;">25-12-13</div>
<div class="c" style="left:144px;top:473px;width:84px;padding-right:1px;height:27px;line-height:29px;background:#ffffff;color:#000;color:#000;"><span style="color:#007000"><span class="k">菲尔特</span></span></div>
<div class="c" style="left:230px;top:473px;width:82px;padding-right:1px;height:27px;line-height:29px;background:#ffffff;letter-spacing:0.4px;letter-spacing:0.4px;"><span style="color:#ff0000">3-3</span>(1-2)</div>
<div class="c" style="left:314px;top:473px;width:35px;padding-right:1px;height:27px;line-height:29px;background:#ffffff;">2-4</div>
<div class="c" style="left:351px;top:473px;width:101px;padding-right:1px;height:27px;line-height:29px;background:#ffffff;color:#000;color:#000;"><span class="k">柏林赫塔</span></div>
<div class="c" style="left:454px;top:473px;width:37px;padding-right:1px;height:27px;line-height:29px;background:#fffaf6;letter-spacing:0.4px;letter-spacing:0.4px;">1.03</div>
<div class="c" style="left:493px;top:473px;width:63px;padding-right:1px;height:27px;line-height:29px;background:#fffaf6;"><span style="color:#ff0000">*</span><span class="k">半球</span></div>
<div class="c" style="left:558px;top:473px;width:39px;padding-right:1px;height:27px;line-height:29px;background:#fffaf6;letter-spacing:0.4px;letter-spacing:0.4px;">0.85</div>
<div class="c" style="left:599px;top:473px;width:57px;padding-right:1px;height:27px;line-height:29px;background:#f2f9fd;letter-spacing:0.4px;letter-spacing:0.4px;">3.87</div>
<div class="c" style="left:658px;top:473px;width:59px;padding-right:1px;height:27px;line-height:29px;background:#f2f9fd;letter-spacing:0.4px;letter-spacing:0.4px;">3.70</div>
<div class="c" style="left:719px;top:473px;width:59px;padding-right:1px;height:27px;line-height:29px;background:#f2f9fd;letter-spacing:0.4px;letter-spacing:0.4px;">1.86</div>
<div class="c" style="left:780px;top:473px;width:35px;padding-right:1px;height:27px;line-height:29px;background:#ffffff;"><span style="color:#0000ff"><span class="k">平</span></span></div>
<div class="c" style="left:817px;top:473px;width:35px;padding-right:1px;height:27px;line-height:29px;background:#ffffff;"><span style="color:#ff0000"><span class="k">贏</span></span></div>
<div class="c" style="left:854px;top:473px;width:54px;padding-right:1px;height:27px;line-height:29px;background:#ffffff;"><span style="color:#ff0000"><span class="k">大</span></span></div>
<div class="c ty" style="left:1px;top:501px;width:68px;padding-right:1px;height:27px;line-height:29px;background:#cc00cc;"><span class="k">德乙</span></div>
<div class="c" style="left:71px;top:501px;width:71px;padding-right:1px;height:27px;line-height:29px;background:#f0f0f0;letter-spacing:0.2px;letter-spacing:0.2px;">25-12-07</div>
<div class="c" style="left:144px;top:501px;width:84px;padding-right:1px;height:27px;line-height:29px;background:#f0f0f0;color:#000;color:#000;"><span class="k">纽伦堡</span></div>
<div class="c" style="left:230px;top:501px;width:82px;padding-right:1px;height:27px;line-height:29px;background:#f0f0f0;letter-spacing:0.4px;letter-spacing:0.4px;"><span style="color:#ff0000">2-2</span>(0-0)</div>
<div class="c" style="left:314px;top:501px;width:35px;padding-right:1px;height:27px;line-height:29px;background:#f0f0f0;">5-3</div>
<div class="c" style="left:351px;top:501px;width:101px;padding-right:1px;height:27px;line-height:29px;background:#f0f0f0;color:#000;color:#000;"><span style="color:#007000"><span class="k">菲尔特</span></span></div>
<div class="c" style="left:454px;top:501px;width:37px;padding-right:1px;height:27px;line-height:29px;background:#fffaf6;letter-spacing:0.4px;letter-spacing:0.4px;">0.95</div>
<div class="c" style="left:493px;top:501px;width:63px;padding-right:1px;height:27px;line-height:29px;background:#fffaf6;"><span class="k">半</span>/<span class="k">一</span></div>
<div class="c" style="left:558px;top:501px;width:39px;padding-right:1px;height:27px;line-height:29px;background:#fffaf6;letter-spacing:0.4px;letter-spacing:0.4px;">0.93</div>
<div class="c" style="left:599px;top:501px;width:57px;padding-right:1px;height:27px;line-height:29px;background:#f2f9fd;letter-spacing:0.4px;letter-spacing:0.4px;">1.73</div>
<div class="c" style="left:658px;top:501px;width:59px;padding-right:1px;height:27px;line-height:29px;background:#f2f9fd;letter-spacing:0.4px;letter-spacing:0.4px;">3.88</div>
<div class="c" style="left:719px;top:501px;width:59px;padding-right:1px;height:27px;line-height:29px;background:#f2f9fd;letter-spacing:0.4px;letter-spacing:0.4px;">4.30</div>
<div class="c" style="left:780px;top:501px;width:35px;padding-right:1px;height:27px;line-height:29px;background:#f0f0f0;"><span style="color:#0000ff"><span class="k">平</span></span></div>
<div class="c" style="left:817px;top:501px;width:35px;padding-right:1px;height:27px;line-height:29px;background:#f0f0f0;"><span style="color:#ff0000"><span class="k">贏</span></span></div>
<div class="c" style="left:854px;top:501px;width:54px;padding-right:1px;height:27px;line-height:29px;background:#f0f0f0;"><span style="color:#ff0000"><span class="k">大</span></span></div>
<div class="c ty" style="left:1px;top:529px;width:68px;padding-right:1px;height:27px;line-height:29px;background:#cc00cc;"><span class="k">德乙</span></div>
<div class="c" style="left:71px;top:529px;width:71px;padding-right:1px;height:27px;line-height:29px;background:#ffffff;letter-spacing:0.2px;letter-spacing:0.2px;">25-11-29</div>
<div class="c" style="left:144px;top:529px;width:84px;padding-right:1px;height:27px;line-height:29px;background:#ffffff;color:#000;color:#000;"><span style="color:#007000"><span class="k">菲尔特</span></span></div>
<div class="c" style="left:230px;top:529px;width:82px;padding-right:1px;height:27px;line-height:29px;background:#ffffff;letter-spacing:0.4px;letter-spacing:0.4px;"><span style="color:#ff0000">0-3</span>(0-3)</div>
<div class="c" style="left:314px;top:529px;width:35px;padding-right:1px;height:27px;line-height:29px;background:#ffffff;">6-9</div>
<div class="c" style="left:351px;top:529px;width:101px;padding-right:1px;height:27px;line-height:29px;background:#ffffff;color:#000;color:#000;"><span class="k">波鸿</span></div>
<div class="c" style="left:454px;top:529px;width:37px;padding-right:1px;height:27px;line-height:29px;background:#fffaf6;letter-spacing:0.4px;letter-spacing:0.4px;">0.90</div>
<div class="c" style="left:493px;top:529px;width:63px;padding-right:1px;height:27px;line-height:29px;background:#fffaf6;"><span style="color:#ff0000">*</span><span class="k">平</span>/<span class="k">半</span></div>
<div class="c" style="left:558px;top:529px;width:39px;padding-right:1px;height:27px;line-height:29px;background:#fffaf6;letter-spacing:0.4px;letter-spacing:0.4px;">0.98</div>
<div class="c" style="left:599px;top:529px;width:57px;padding-right:1px;height:27px;line-height:29px;background:#f2f9fd;letter-spacing:0.4px;letter-spacing:0.4px;">3.09</div>
<div class="c" style="left:658px;top:529px;width:59px;padding-right:1px;height:27px;line-height:29px;background:#f2f9fd;letter-spacing:0.4px;letter-spacing:0.4px;">3.67</div>
<div class="c" style="left:719px;top:529px;width:59px;padding-right:1px;height:27px;line-height:29px;background:#f2f9fd;letter-spacing:0.4px;letter-spacing:0.4px;">2.11</div>
<div class="c" style="left:780px;top:529px;width:35px;padding-right:1px;height:27px;line-height:29px;background:#ffffff;"><span style="color:#007000"><span class="k">負</span></span></div>
<div class="c" style="left:817px;top:529px;width:35px;padding-right:1px;height:27px;line-height:29px;background:#ffffff;"><span style="color:#007000"><span class="k">輸</span></span></div>
<div class="c" style="left:854px;top:529px;width:54px;padding-right:1px;height:27px;line-height:29px;background:#ffffff;"><span style="color:#0000ff"><span class="k">走</span></span></div>
<div class="c ty" style="left:1px;top:557px;width:68px;padding-right:1px;height:27px;line-height:29px;background:#cc00cc;"><span class="k">德乙</span></div>
<div class="c" style="left:71px;top:557px;width:71px;padding-right:1px;height:27px;line-height:29px;background:#f0f0f0;letter-spacing:0.2px;letter-spacing:0.2px;">25-11-23</div>
<div class="c" style="left:144px;top:557px;width:84px;padding-right:1px;height:27px;line-height:29px;background:#f0f0f0;color:#000;color:#000;"><span class="k">达姆斯塔特</span></div>
<div class="c" style="left:230px;top:557px;width:82px;padding-right:1px;height:27px;line-height:29px;background:#f0f0f0;letter-spacing:0.4px;letter-spacing:0.4px;"><span style="color:#ff0000">4-2</span>(1-1)</div>
<div class="c" style="left:314px;top:557px;width:35px;padding-right:1px;height:27px;line-height:29px;background:#f0f0f0;">5-2</div>
<div class="c" style="left:351px;top:557px;width:101px;padding-right:1px;height:27px;line-height:29px;background:#f0f0f0;color:#000;color:#000;"><span style="color:#007000"><span class="k">菲尔特</span></span></div>
<div class="c" style="left:454px;top:557px;width:37px;padding-right:1px;height:27px;line-height:29px;background:#fffaf6;letter-spacing:0.4px;letter-spacing:0.4px;">0.80</div>
<div class="c" style="left:493px;top:557px;width:63px;padding-right:1px;height:27px;line-height:29px;background:#fffaf6;"><span class="k">一球</span></div>
<div class="c" style="left:558px;top:557px;width:39px;padding-right:1px;height:27px;line-height:29px;background:#fffaf6;letter-spacing:0.4px;letter-spacing:0.4px;">1.08</div>
<div class="c" style="left:599px;top:557px;width:57px;padding-right:1px;height:27px;line-height:29px;background:#f2f9fd;letter-spacing:0.4px;letter-spacing:0.4px;">1.52</div>
<div class="c" style="left:658px;top:557px;width:59px;padding-right:1px;height:27px;line-height:29px;background:#f2f9fd;letter-spacing:0.4px;letter-spacing:0.4px;">4.40</div>
<div class="c" style="left:719px;top:557px;width:59px;padding-right:1px;height:27px;line-height:29px;background:#f2f9fd;letter-spacing:0.4px;letter-spacing:0.4px;">5.37</div>
<div class="c" style="left:780px;top:557px;width:35px;padding-right:1px;height:27px;line-height:29px;background:#f0f0f0;"><span style="color:#007000"><span class="k">負</span></span></div>
<div class="c" style="left:817px;top:557px;width:35px;padding-right:1px;height:27px;line-height:29px;background:#f0f0f0;"><span style="color:#007000"><span class="k">輸</span></span></div>
<div class="c" style="left:854px;top:557px;width:54px;padding-right:1px;height:27px;line-height:29px;background:#f0f0f0;"><span style="color:#ff0000"><span class="k">大</span></span></div>
<div class="c ty" style="left:1px;top:585px;width:68px;padding-right:1px;height:27px;line-height:29px;background:#00a5a5;"><span class="k">球会友谊</span></div>
<div class="c" style="left:71px;top:585px;width:71px;padding-right:1px;height:27px;line-height:29px;background:#ffffff;letter-spacing:0.2px;letter-spacing:0.2px;">25-11-13</div>
<div class="c" style="left:144px;top:585px;width:84px;padding-right:1px;height:27px;line-height:29px;background:#ffffff;color:#000;color:#000;"><span class="k">霍芬海姆</span></div>
<div class="c" style="left:230px;top:585px;width:82px;padding-right:1px;height:27px;line-height:29px;background:#ffffff;letter-spacing:0.4px;letter-spacing:0.4px;"><span style="color:#ff0000">3-0</span>(1-0)</div>
<div class="c" style="left:314px;top:585px;width:35px;padding-right:1px;height:27px;line-height:29px;background:#ffffff;">0-0</div>
<div class="c" style="left:351px;top:585px;width:101px;padding-right:1px;height:27px;line-height:29px;background:#ffffff;color:#000;color:#000;"><span style="color:#007000"><span class="k">菲尔特</span></span></div>
<div class="c" style="left:454px;top:585px;width:37px;padding-right:1px;height:27px;line-height:29px;background:#fffaf6;letter-spacing:0.4px;letter-spacing:0.4px;"></div>
<div class="c" style="left:493px;top:585px;width:63px;padding-right:1px;height:27px;line-height:29px;background:#fffaf6;"></div>
<div class="c" style="left:558px;top:585px;width:39px;padding-right:1px;height:27px;line-height:29px;background:#fffaf6;letter-spacing:0.4px;letter-spacing:0.4px;"></div>
<div class="c" style="left:599px;top:585px;width:57px;padding-right:1px;height:27px;line-height:29px;background:#f2f9fd;letter-spacing:0.4px;letter-spacing:0.4px;"></div>
<div class="c" style="left:658px;top:585px;width:59px;padding-right:1px;height:27px;line-height:29px;background:#f2f9fd;letter-spacing:0.4px;letter-spacing:0.4px;"></div>
<div class="c" style="left:719px;top:585px;width:59px;padding-right:1px;height:27px;line-height:29px;background:#f2f9fd;letter-spacing:0.4px;letter-spacing:0.4px;"></div>
<div class="c" style="left:780px;top:585px;width:35px;padding-right:1px;height:27px;line-height:29px;background:#ffffff;"><span style="color:#007000"><span class="k">負</span></span></div>
<div class="c" style="left:817px;top:585px;width:35px;padding-right:1px;height:27px;line-height:29px;background:#ffffff;"></div>
<div class="c" style="left:854px;top:585px;width:54px;padding-right:1px;height:27px;line-height:29px;background:#ffffff;"></div>
<div class="c ty" style="left:1px;top:613px;width:68px;padding-right:1px;height:27px;line-height:29px;background:#cc00cc;"><span class="k">德乙</span></div>
<div class="c" style="left:71px;top:613px;width:71px;padding-right:1px;height:27px;line-height:29px;background:#f0f0f0;letter-spacing:0.2px;letter-spacing:0.2px;">25-11-08</div>
<div class="c" style="left:144px;top:613px;width:84px;padding-right:1px;height:27px;line-height:29px;background:#f0f0f0;color:#000;color:#000;"><span style="color:#007000"><span class="k">菲尔特</span></span></div>
<div class="c" style="left:230px;top:613px;width:82px;padding-right:1px;height:27px;line-height:29px;background:#f0f0f0;letter-spacing:0.4px;letter-spacing:0.4px;"><span style="color:#ff0000">1-0</span>(0-0)</div>
<div class="c" style="left:314px;top:613px;width:35px;padding-right:1px;height:27px;line-height:29px;background:#f0f0f0;">4-7</div>
<div class="c" style="left:351px;top:613px;width:101px;padding-right:1px;height:27px;line-height:29px;background:#f0f0f0;color:#000;color:#000;"><span class="k">普鲁士明斯特</span></div>
<div class="c" style="left:454px;top:613px;width:37px;padding-right:1px;height:27px;line-height:29px;background:#fffaf6;letter-spacing:0.4px;letter-spacing:0.4px;">1.00</div>
<div class="c" style="left:493px;top:613px;width:63px;padding-right:1px;height:27px;line-height:29px;background:#fffaf6;"><span class="k">平手</span></div>
<div class="c" style="left:558px;top:613px;width:39px;padding-right:1px;height:27px;line-height:29px;background:#fffaf6;letter-spacing:0.4px;letter-spacing:0.4px;">0.88</div>
<div class="c" style="left:599px;top:613px;width:57px;padding-right:1px;height:27px;line-height:29px;background:#f2f9fd;letter-spacing:0.4px;letter-spacing:0.4px;">2.48</div>
<div class="c" style="left:658px;top:613px;width:59px;padding-right:1px;height:27px;line-height:29px;background:#f2f9fd;letter-spacing:0.4px;letter-spacing:0.4px;">3.54</div>
<div class="c" style="left:719px;top:613px;width:59px;padding-right:1px;height:27px;line-height:29px;background:#f2f9fd;letter-spacing:0.4px;letter-spacing:0.4px;">2.60</div>
<div class="c" style="left:780px;top:613px;width:35px;padding-right:1px;height:27px;line-height:29px;background:#f0f0f0;"><span style="color:#ff0000"><span class="k">勝</span></span></div>
<div class="c" style="left:817px;top:613px;width:35px;padding-right:1px;height:27px;line-height:29px;background:#f0f0f0;"><span style="color:#ff0000"><span class="k">贏</span></span></div>
<div class="c" style="left:854px;top:613px;width:54px;padding-right:1px;height:27px;line-height:29px;background:#f0f0f0;"><span style="color:#007000"><span class="k">小</span></span></div>
<div class="c ty" style="left:1px;top:641px;width:68px;padding-right:1px;height:27px;line-height:29px;background:#cc00cc;"><span class="k">德乙</span></div>
<div class="c" style="left:71px;top:641px;width:71px;padding-right:1px;height:27px;line-height:29px;background:#ffffff;letter-spacing:0.2px;letter-spacing:0.2px;">25-11-02</div>
<div class="c" style="left:144px;top:641px;width:84px;padding-right:1px;height:27px;line-height:29px;background:#ffffff;color:#000;color:#000;"><span class="k">帕德博恩</span></div>
<div class="c" style="left:230px;top:641px;width:82px;padding-right:1px;height:27px;line-height:29px;background:#ffffff;letter-spacing:0.4px;letter-spacing:0.4px;"><span style="color:#ff0000">2-1</span>(1-0)</div>
<div class="c" style="left:314px;top:641px;width:35px;padding-right:1px;height:27px;line-height:29px;background:#ffffff;">5-5</div>
<div class="c" style="left:351px;top:641px;width:101px;padding-right:1px;height:27px;line-height:29px;background:#ffffff;color:#000;color:#000;"><span style="color:#007000"><span class="k">菲尔特</span></span></div>
<div class="c" style="left:454px;top:641px;width:37px;padding-right:1px;height:27px;line-height:29px;background:#fffaf6;letter-spacing:0.4px;letter-spacing:0.4px;">0.93</div>
<div class="c" style="left:493px;top:641px;width:63px;padding-right:1px;height:27px;line-height:29px;background:#fffaf6;"><span class="k">球半</span></div>
<div class="c" style="left:558px;top:641px;width:39px;padding-right:1px;height:27px;line-height:29px;background:#fffaf6;letter-spacing:0.4px;letter-spacing:0.4px;">0.95</div>
<div class="c" style="left:599px;top:641px;width:57px;padding-right:1px;height:27px;line-height:29px;background:#f2f9fd;letter-spacing:0.4px;letter-spacing:0.4px;">1.35</div>
<div class="c" style="left:658px;top:641px;width:59px;padding-right:1px;height:27px;line-height:29px;background:#f2f9fd;letter-spacing:0.4px;letter-spacing:0.4px;">5.09</div>
<div class="c" style="left:719px;top:641px;width:59px;padding-right:1px;height:27px;line-height:29px;background:#f2f9fd;letter-spacing:0.4px;letter-spacing:0.4px;">7.62</div>
<div class="c" style="left:780px;top:641px;width:35px;padding-right:1px;height:27px;line-height:29px;background:#ffffff;"><span style="color:#007000"><span class="k">負</span></span></div>
<div class="c" style="left:817px;top:641px;width:35px;padding-right:1px;height:27px;line-height:29px;background:#ffffff;"><span style="color:#ff0000"><span class="k">贏</span></span></div>
<div class="c" style="left:854px;top:641px;width:54px;padding-right:1px;height:27px;line-height:29px;background:#ffffff;"><span style="color:#007000"><span class="k">小</span></span></div>
<div class="c ty" style="left:1px;top:669px;width:68px;padding-right:1px;height:27px;line-height:29px;background:#990000;"><span class="k">德国杯</span></div>
<div class="c" style="left:71px;top:669px;width:71px;padding-right:1px;height:27px;line-height:29px;background:#f0f0f0;letter-spacing:0.2px;letter-spacing:0.2px;">25-10-30</div>
<div class="c" style="left:144px;top:669px;width:84px;padding-right:1px;height:27px;line-height:29px;background:#f0f0f0;color:#000;color:#000;"><span class="rc">1</span><span style="color:#007000"><span class="k">菲尔特</span></span></div>
<div class="c" style="left:230px;top:669px;width:82px;padding-right:1px;height:27px;line-height:29px;background:#f0f0f0;letter-spacing:0.4px;letter-spacing:0.4px;"><span style="color:#ff0000">0-1</span>(0-1)</div>
<div class="c" style="left:314px;top:669px;width:35px;padding-right:1px;height:27px;line-height:29px;background:#f0f0f0;">6-8</div>
<div class="c" style="left:351px;top:669px;width:101px;padding-right:1px;height:27px;line-height:29px;background:#f0f0f0;color:#000;color:#000;"><span class="k">凯泽斯劳滕</span></div>
<div class="c" style="left:454px;top:669px;width:37px;padding-right:1px;height:27px;line-height:29px;background:#fffaf6;letter-spacing:0.4px;letter-spacing:0.4px;">0.97</div>
<div class="c" style="left:493px;top:669px;width:63px;padding-right:1px;height:27px;line-height:29px;background:#fffaf6;"><span style="color:#ff0000">*</span><span class="k">平</span>/<span class="k">半</span></div>
<div class="c" style="left:558px;top:669px;width:39px;padding-right:1px;height:27px;line-height:29px;background:#fffaf6;letter-spacing:0.4px;letter-spacing:0.4px;">0.91</div>
<div class="c" style="left:599px;top:669px;width:57px;padding-right:1px;height:27px;line-height:29px;background:#f2f9fd;letter-spacing:0.4px;letter-spacing:0.4px;">2.92</div>
<div class="c" style="left:658px;top:669px;width:59px;padding-right:1px;height:27px;line-height:29px;background:#f2f9fd;letter-spacing:0.4px;letter-spacing:0.4px;">3.68</div>
<div class="c" style="left:719px;top:669px;width:59px;padding-right:1px;height:27px;line-height:29px;background:#f2f9fd;letter-spacing:0.4px;letter-spacing:0.4px;">2.19</div>
<div class="c" style="left:780px;top:669px;width:35px;padding-right:1px;height:27px;line-height:29px;background:#f0f0f0;"><span style="color:#007000"><span class="k">負</span></span></div>
<div class="c" style="left:817px;top:669px;width:35px;padding-right:1px;height:27px;line-height:29px;background:#f0f0f0;"><span style="color:#007000"><span class="k">輸</span></span></div>
<div class="c" style="left:854px;top:669px;width:54px;padding-right:1px;height:27px;line-height:29px;background:#f0f0f0;"><span style="color:#007000"><span class="k">小</span></span></div>
<div class="c ty" style="left:1px;top:697px;width:68px;padding-right:1px;height:27px;line-height:29px;background:#cc00cc;"><span class="k">德乙</span></div>
<div class="c" style="left:71px;top:697px;width:71px;padding-right:1px;height:27px;line-height:29px;background:#ffffff;letter-spacing:0.2px;letter-spacing:0.2px;">25-10-25</div>
<div class="c" style="left:144px;top:697px;width:84px;padding-right:1px;height:27px;line-height:29px;background:#ffffff;color:#000;color:#000;"><span style="color:#007000"><span class="k">菲尔特</span></span></div>
<div class="c" style="left:230px;top:697px;width:82px;padding-right:1px;height:27px;line-height:29px;background:#ffffff;letter-spacing:0.4px;letter-spacing:0.4px;"><span style="color:#ff0000">1-4</span>(0-2)</div>
<div class="c" style="left:314px;top:697px;width:35px;padding-right:1px;height:27px;line-height:29px;background:#ffffff;">9-5</div>
<div class="c" style="left:351px;top:697px;width:101px;padding-right:1px;height:27px;line-height:29px;background:#ffffff;color:#000;color:#000;"><span class="k">卡尔斯鲁厄</span></div>
<div class="c" style="left:454px;top:697px;width:37px;padding-right:1px;height:27px;line-height:29px;background:#fffaf6;letter-spacing:0.4px;letter-spacing:0.4px;">0.86</div>
<div class="c" style="left:493px;top:697px;width:63px;padding-right:1px;height:27px;line-height:29px;background:#fffaf6;"><span style="color:#ff0000">*</span><span class="k">半球</span></div>
<div class="c" style="left:558px;top:697px;width:39px;padding-right:1px;height:27px;line-height:29px;background:#fffaf6;letter-spacing:0.4px;letter-spacing:0.4px;">1.02</div>
<div class="c" style="left:599px;top:697px;width:57px;padding-right:1px;height:27px;line-height:29px;background:#f2f9fd;letter-spacing:0.4px;letter-spacing:0.4px;">3.14</div>
<div class="c" style="left:658px;top:697px;width:59px;padding-right:1px;height:27px;line-height:29px;background:#f2f9fd;letter-spacing:0.4px;letter-spacing:0.4px;">3.75</div>
<div class="c" style="left:719px;top:697px;width:59px;padding-right:1px;height:27px;line-height:29px;background:#f2f9fd;letter-spacing:0.4px;letter-spacing:0.4px;">2.07</div>
<div class="c" style="left:780px;top:697px;width:35px;padding-right:1px;height:27px;line-height:29px;background:#ffffff;"><span style="color:#007000"><span class="k">負</span></span></div>
<div class="c" style="left:817px;top:697px;width:35px;padding-right:1px;height:27px;line-height:29px;background:#ffffff;"><span style="color:#007000"><span class="k">輸</span></span></div>
<div class="c" style="left:854px;top:697px;width:54px;padding-right:1px;height:27px;line-height:29px;background:#ffffff;"><span style="color:#ff0000"><span class="k">大</span></span></div>
<div class="c ty" style="left:1px;top:725px;width:68px;padding-right:1px;height:27px;line-height:29px;background:#cc00cc;"><span class="k">德乙</span></div>
<div class="c" style="left:71px;top:725px;width:71px;padding-right:1px;height:27px;line-height:29px;background:#f0f0f0;letter-spacing:0.2px;letter-spacing:0.2px;">25-10-19</div>
<div class="c" style="left:144px;top:725px;width:84px;padding-right:1px;height:27px;line-height:29px;background:#f0f0f0;color:#000;color:#000;"><span class="k">艾禾斯堡</span></div>
<div class="c" style="left:230px;top:725px;width:82px;padding-right:1px;height:27px;line-height:29px;background:#f0f0f0;letter-spacing:0.4px;letter-spacing:0.4px;"><span style="color:#ff0000">6-0</span>(1-0)</div>
<div class="c" style="left:314px;top:725px;width:35px;padding-right:1px;height:27px;line-height:29px;background:#f0f0f0;">6-3</div>
<div class="c" style="left:351px;top:725px;width:101px;padding-right:1px;height:27px;line-height:29px;background:#f0f0f0;color:#000;color:#000;"><span style="color:#007000"><span class="k">菲尔特</span></span></div>
<div class="c" style="left:454px;top:725px;width:37px;padding-right:1px;height:27px;line-height:29px;background:#fffaf6;letter-spacing:0.4px;letter-spacing:0.4px;">1.07</div>
<div class="c" style="left:493px;top:725px;width:63px;padding-right:1px;height:27px;line-height:29px;background:#fffaf6;"><span class="k">一</span>/<span class="k">球半</span></div>
<div class="c" style="left:558px;top:725px;width:39px;padding-right:1px;height:27px;line-height:29px;background:#fffaf6;letter-spacing:0.4px;letter-spacing:0.4px;">0.81</div>
<div class="c" style="left:599px;top:725px;width:57px;padding-right:1px;height:27px;line-height:29px;background:#f2f9fd;letter-spacing:0.4px;letter-spacing:0.4px;">1.53</div>
<div class="c" style="left:658px;top:725px;width:59px;padding-right:1px;height:27px;line-height:29px;background:#f2f9fd;letter-spacing:0.4px;letter-spacing:0.4px;">4.48</div>
<div class="c" style="left:719px;top:725px;width:59px;padding-right:1px;height:27px;line-height:29px;background:#f2f9fd;letter-spacing:0.4px;letter-spacing:0.4px;">5.25</div>
<div class="c" style="left:780px;top:725px;width:35px;padding-right:1px;height:27px;line-height:29px;background:#f0f0f0;"><span style="color:#007000"><span class="k">負</span></span></div>
<div class="c" style="left:817px;top:725px;width:35px;padding-right:1px;height:27px;line-height:29px;background:#f0f0f0;"><span style="color:#007000"><span class="k">輸</span></span></div>
<div class="c" style="left:854px;top:725px;width:54px;padding-right:1px;height:27px;line-height:29px;background:#f0f0f0;"><span style="color:#ff0000"><span class="k">大</span></span></div>
<div class="sel" style="left:474px;top:433px;width:53px;height:18px;line-height:20px;font-size:13px;">Crow*<svg class="arr" width="7" height="7" viewBox="0 0 7 7"><path d="M0.2 0.5 H6.8 L3.5 6.8 Z" fill="#000"/></svg></div>
<div class="sel" style="left:541px;top:433px;width:30px;height:18px;line-height:20px;font-size:12px;">终<svg class="arr" width="7" height="7" viewBox="0 0 7 7"><path d="M0.2 0.5 H6.8 L3.5 6.8 Z" fill="#000"/></svg></div>
<div class="sel" style="left:625px;top:433px;width:78px;height:18px;line-height:20px;font-size:12px;">胜平负均值<svg class="arr" width="7" height="7" viewBox="0 0 7 7"><path d="M0.2 0.5 H6.8 L3.5 6.8 Z" fill="#000"/></svg></div>
<div class="sel" style="left:717px;top:433px;width:30px;height:18px;line-height:20px;font-size:12px;">终<svg class="arr" width="7" height="7" viewBox="0 0 7 7"><path d="M0.2 0.5 H6.8 L3.5 6.8 Z" fill="#000"/></svg></div>
<div class="sel" style="left:820px;top:433px;width:42px;height:18px;line-height:20px;font-size:12px;">全场<svg class="arr" width="7" height="7" viewBox="0 0 7 7"><path d="M0.2 0.5 H6.8 L3.5 6.8 Z" fill="#000"/></svg></div>
</body></html>
